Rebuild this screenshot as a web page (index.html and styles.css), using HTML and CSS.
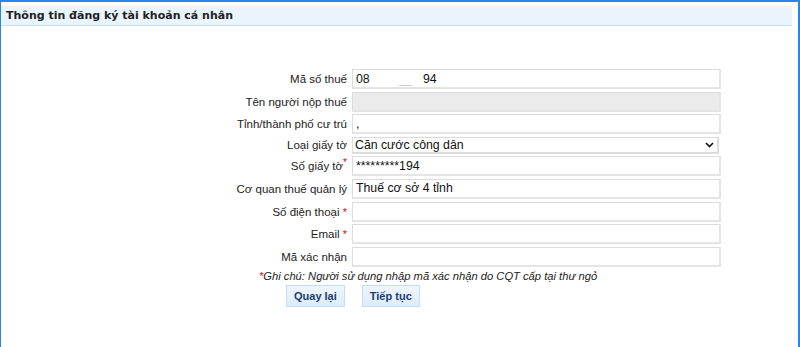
FILE: index.html
```html
<!DOCTYPE html>
<html lang="vi">
<head>
    <meta charset="UTF-8">
    <meta name="viewport" content="width=device-width, initial-scale=1.0">
    <title>Thông tin đăng ký tài khoản cá nhân</title>
    <link rel="stylesheet" href="styles.css">
</head>
<body>
    <div class="frame">
        <div class="header">
            <h1>Thông tin đăng ký tài khoản cá nhân</h1>
        </div>

        <form class="form" action="#" method="post">
            <div class="grid">
                <label for="mst">Mã số thuế</label>
                <div class="field"><input type="text" id="mst" value="08" class="input"><span class="mask"></span><span class="tail">94</span></div>

                <label for="ten">Tên người nộp thuế</label>
                <input type="text" id="ten" class="input" disabled>

                <label for="tinh">Tỉnh/thành phố cư trú</label>
                <input type="text" id="tinh" class="input" value=",">

                <label for="loai">Loại giấy tờ</label>
                <select id="loai" class="select">
                    <option>Căn cước công dân</option>
                </select>

                <label for="so">Số giấy tờ<sup class="req">*</sup></label>
                <input type="text" id="so" class="input" value="*********194">

                <label for="cq">Cơ quan thuế quản lý</label>
                <input type="text" id="cq" class="input" value="Thuế cơ sở 4 tỉnh">

                <label for="sdt">Số điện thoại <span class="req">*</span></label>
                <input type="text" id="sdt" class="input">

                <label for="email">Email <span class="req">*</span></label>
                <input type="text" id="email" class="input">

                <label for="ma">Mã xác nhận</label>
                <input type="text" id="ma" class="input">
            </div>

            <p class="note"><span class="req">*</span>Ghi chú: Người sử dụng nhập mã xác nhận do CQT cấp tại thư ngỏ</p>

            <div class="actions">
                <button type="button" class="button">Quay lại</button>
                <button type="submit" class="button">Tiếp tục</button>
            </div>
        </form>
    </div>
</body>
</html>
```

FILE: styles.css
```css
body {
    margin: 0;
    font-family: "Liberation Sans", Arial, sans-serif;
    font-size: 12px;
    color: #222;
    background: #fff;
}

.frame {
    width: 797px;
    height: 344px;
    border: 1px solid #2088f0;
    border-top-width: 2px;
    border-right-width: 2px;
    box-shadow: inset 0 -2px 0 #d8ebfc;
    padding-top: 4px;
    box-sizing: content-box;
}

.header {
    margin-right: 6px;
    height: 19px;
    background: #e9f4fd;
    border-bottom: 1px solid #c4def6;
    padding-left: 5px;
}

.header h1 {
    margin: 0;
    font-family: "DejaVu Sans", Verdana, sans-serif;
    font-size: 11px;
    font-weight: bold;
    line-height: 19px;
    color: #222;
}

.form {
    padding-top: 43px;
}

.grid {
    display: grid;
    grid-template-columns: 346px 369px;
    column-gap: 5px;
    row-gap: 2.6px;
    align-items: center;
}

.grid label {
    text-align: right;
    font-size: 11.5px;
    color: #222;
}

.input, .select {
    box-sizing: border-box;
    width: 369px;
    height: 20px;
    margin: 0;
    padding: 0 3px;
    border: 2px solid #e2e2e2;
    border-width: 1px 2px 2px 1px;
    border-color: #dcdcdc #e4e4e4 #e4e4e4 #dcdcdc;
    font-family: "Liberation Sans", Arial, sans-serif;
    font-size: 12.3px;
    color: #111;
    background: #fff;
    outline: none;
}

.input:disabled {
    background: #ebebeb;
}

.field {
    position: relative;
}

.field .tail {
    position: absolute;
    left: 71px;
    top: 3px;
    font-size: 12.3px;
    color: #111;
}

.field .mask {
    position: absolute;
    left: 47px;
    top: 16px;
    width: 13px;
    height: 1px;
    background: #ccc;
}

.select {
    width: 367px;
    height: 17px;
    padding: 0 0 0 2px;
    border: 1px solid #dcdcdc;
    border-right-width: 2px;
    border-bottom-width: 2px;
    -webkit-appearance: none;
    appearance: none;
    background: #fff url("data:image/svg+xml;utf8,<svg xmlns='http://www.w3.org/2000/svg' width='9' height='6' viewBox='0 0 9 6'><path d='M1 1l3.5 3.5 3.5-3.5' fill='none' stroke='%23111' stroke-width='1.6'/></svg>") no-repeat right 3px center;
}

.req {
    color: #e00;
    font-size: 11px;
}

sup.req {
    font-size: 10px;
    vertical-align: 4px;
    line-height: 0;
}

.note {
    margin: 3px 0 0 258px;
    font-size: 11.2px;
    font-style: italic;
    color: #222;
}

.actions {
    display: flex;
    gap: 17px;
    margin: 3px 0 0 285px;
}

.button {
    height: 22px;
    padding: 0 7px;
    background: linear-gradient(#eef6fe, #dcecfb);
    border: 1px solid #c3ddf5;
    color: #1a3c6e;
    font-family: "Liberation Sans", Arial, sans-serif;
    font-size: 11px;
    font-weight: bold;
    cursor: pointer;
}

.button:hover {
    background: #d0e5fa;
}
```
